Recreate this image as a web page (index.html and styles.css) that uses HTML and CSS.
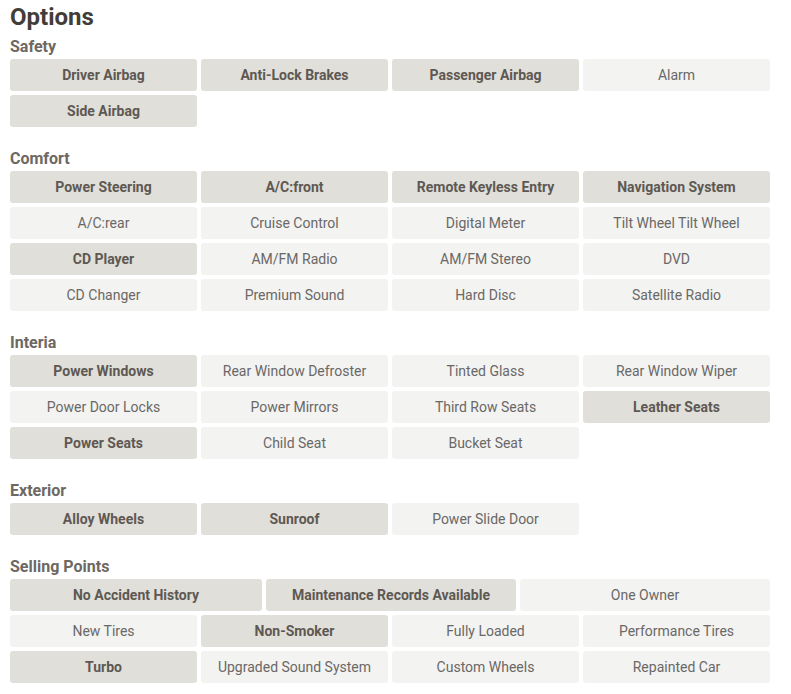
FILE: index.html
```html
<!DOCTYPE html>
<html>
<head>
<meta charset="utf-8">
<link rel="stylesheet" href="styles.css">
</head>
<body>
<div class="page">
  <h1 class="title">Options</h1>

  <section class="section first">
    <h2 class="heading">Safety</h2>
    <div class="chips">
      <div class="chip on">Driver Airbag</div>
      <div class="chip on">Anti-Lock Brakes</div>
      <div class="chip on">Passenger Airbag</div>
      <div class="chip">Alarm</div>
      <div class="chip on">Side Airbag</div>
    </div>
  </section>

  <section class="section">
    <h2 class="heading">Comfort</h2>
    <div class="chips">
      <div class="chip on">Power Steering</div>
      <div class="chip on">A/C:front</div>
      <div class="chip on">Remote Keyless Entry</div>
      <div class="chip on">Navigation System</div>
      <div class="chip">A/C:rear</div>
      <div class="chip">Cruise Control</div>
      <div class="chip">Digital Meter</div>
      <div class="chip">Tilt Wheel Tilt Wheel</div>
      <div class="chip on">CD Player</div>
      <div class="chip">AM/FM Radio</div>
      <div class="chip">AM/FM Stereo</div>
      <div class="chip">DVD</div>
      <div class="chip">CD Changer</div>
      <div class="chip">Premium Sound</div>
      <div class="chip">Hard Disc</div>
      <div class="chip">Satellite Radio</div>
    </div>
  </section>

  <section class="section">
    <h2 class="heading">Interia</h2>
    <div class="chips">
      <div class="chip on">Power Windows</div>
      <div class="chip">Rear Window Defroster</div>
      <div class="chip">Tinted Glass</div>
      <div class="chip">Rear Window Wiper</div>
      <div class="chip">Power Door Locks</div>
      <div class="chip">Power Mirrors</div>
      <div class="chip">Third Row Seats</div>
      <div class="chip on">Leather Seats</div>
      <div class="chip on">Power Seats</div>
      <div class="chip">Child Seat</div>
      <div class="chip">Bucket Seat</div>
    </div>
  </section>

  <section class="section">
    <h2 class="heading">Exterior</h2>
    <div class="chips">
      <div class="chip on">Alloy Wheels</div>
      <div class="chip on">Sunroof</div>
      <div class="chip">Power Slide Door</div>
    </div>
  </section>

  <section class="section">
    <h2 class="heading">Selling Points</h2>
    <div class="chips three">
      <div class="chip on">No Accident History</div>
      <div class="chip on">Maintenance Records Available</div>
      <div class="chip">One Owner</div>
    </div>
    <div class="chips">
      <div class="chip">New Tires</div>
      <div class="chip on">Non-Smoker</div>
      <div class="chip">Fully Loaded</div>
      <div class="chip">Performance Tires</div>
      <div class="chip on">Turbo</div>
      <div class="chip">Upgraded Sound System</div>
      <div class="chip">Custom Wheels</div>
      <div class="chip">Repainted Car</div>
    </div>
  </section>
</div>
</body>
</html>
```

FILE: styles.css
```css
html, body {
  margin: 0;
  padding: 0;
  background: #ffffff;
}

body {
  font-family: Roboto, "Liberation Sans", Arial, sans-serif;
}

.page {
  width: 760px;
  padding: 3px 0 0 10px;
}

.title {
  margin: 0;
  font-size: 24px;
  line-height: 28px;
  font-weight: 700;
  color: #433d38;
}

.section {
  margin-top: 22px;
}

.section.first {
  margin-top: 6px;
}

.heading {
  margin: 0 0 2px 0;
  font-size: 16px;
  line-height: 20px;
  font-weight: 700;
  color: #6d6862;
}

.chips {
  display: grid;
  grid-template-columns: repeat(4, 187px);
  gap: 4px;
}

.chips.three {
  grid-template-columns: 252px 250px 250px;
  margin-bottom: 4px;
}

.chip {
  height: 32px;
  line-height: 32px;
  text-align: center;
  font-size: 14px;
  border-radius: 3px;
  background: #f3f3f2;
  color: #6a6866;
  white-space: nowrap;
}

.chip.on {
  background: #e0dfd9;
  color: #5e5853;
  font-weight: 700;
}
```
